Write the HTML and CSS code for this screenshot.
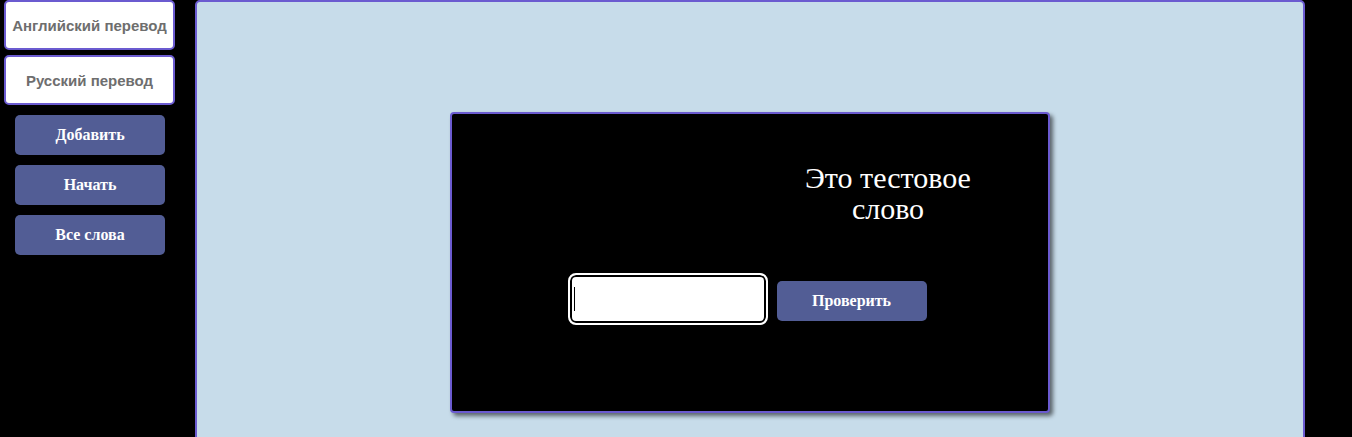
FILE: index.html
```html
<!DOCTYPE html>
<html lang="ru">
<head>
<meta charset="utf-8">
<title>Словарь</title>
<link rel="stylesheet" href="styles.css">
</head>
<body>
<div class="app">
  <aside class="sidebar">
    <div class="field">Английский перевод</div>
    <div class="field">Русский перевод</div>
    <div class="actions">
      <button class="btn">Добавить</button>
      <button class="btn">Начать</button>
      <button class="btn">Все слова</button>
    </div>
  </aside>
  <main class="panel">
    <section class="card">
      <div class="word-row">
        <div class="word">Это тестовое слово</div>
      </div>
      <div class="check-row">
        <div class="answer"><span class="caret"></span></div>
        <button class="btn btn-check">Проверить</button>
      </div>
    </section>
  </main>
</div>
</body>
</html>
```

FILE: styles.css
```css
html, body {
  margin: 0;
  padding: 0;
  background: #000;
  height: 100%;
  overflow: hidden;
}
.app {
  display: flex;
  align-items: flex-start;
}
.sidebar {
  width: 191px;
  padding-left: 4px;
  display: flex;
  flex-direction: column;
}
.field {
  box-sizing: border-box;
  width: 171px;
  height: 50px;
  margin-bottom: 5px;
  background: #fff;
  border: 2px solid #6b5bd0;
  border-radius: 5px;
  display: flex;
  align-items: center;
  justify-content: center;
  font-family: "Liberation Sans", Arial, sans-serif;
  font-weight: bold;
  font-size: 15px;
  color: #6e6e6e;
}
.actions {
  display: flex;
  flex-direction: column;
  gap: 10px;
  padding-left: 11px;
  padding-top: 5px;
}
.btn {
  width: 150px;
  height: 40px;
  border: none;
  border-radius: 5px;
  background: #525d95;
  color: #fff;
  font-family: "Liberation Serif", "Times New Roman", serif;
  font-weight: bold;
  font-size: 16px;
  padding: 0;
}
.panel {
  box-sizing: border-box;
  width: 1110px;
  height: 460px;
  background: #c7dcea;
  border: 2px solid #6b5bd0;
  border-radius: 5px 5px 0 0;
  display: flex;
  justify-content: center;
  padding-top: 110px;
}
.card {
  box-sizing: border-box;
  width: 600px;
  height: 301px;
  background: #000;
  border: 2px solid #6b5bd0;
  border-radius: 4px;
  box-shadow: 3px 3px 4px rgba(0,0,0,0.55);
  display: flex;
  flex-direction: column;
}
.word-row {
  padding-left: 336px;
  padding-top: 48px;
}
.word {
  width: 200px;
  text-align: center;
  color: #fff;
  font-family: "Liberation Serif", "Times New Roman", serif;
  font-size: 30px;
  line-height: 31px;
}
.check-row {
  display: flex;
  align-items: flex-start;
  justify-content: center;
  gap: 9px;
  padding-right: 6px;
  margin-top: 49px;
}
.answer {
  box-sizing: border-box;
  width: 200px;
  height: 52px;
  background: #fff;
  border: 2px solid #fff;
  border-radius: 8px;
  box-shadow: inset 0 0 0 2px #000;
  display: flex;
  align-items: center;
  padding-left: 4px;
}
.caret {
  width: 1px;
  height: 24px;
  background: #000;
}
.btn-check {
  margin-top: 8px;
}
```
